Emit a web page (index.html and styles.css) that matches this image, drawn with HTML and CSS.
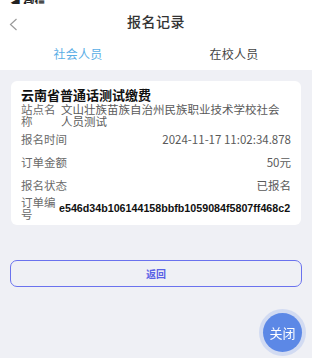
FILE: index.html
```html
<!DOCTYPE html>
<html>
<head>
  <meta charset="utf-8">
  <title>报名记录</title>
  <link rel="stylesheet" href="styles.css">
</head>
<body>

  <header class="top">
    <div class="status">&#9664; 微信</div>
    <div class="nav">
      <svg class="back" width="9" height="13" viewBox="0 0 9 13">
        <path d="M7.5 1 L1.5 6.5 L7.5 12" fill="none" stroke="#9a9a9a" stroke-width="1.2"/>
      </svg>
      <h1>报名记录</h1>
    </div>
    <div class="tabs">
      <span class="tab active">社会人员</span>
      <span class="tab">在校人员</span>
    </div>
  </header>

  <div class="card">
    <div class="card-title">云南省普通话测试缴费</div>
    <div class="row wrap">
      <span class="label">站点名称</span>
      <span class="value">文山壮族苗族自治州民族职业技术学校社会人员测试</span>
    </div>
    <div class="row first">
      <span class="label">报名时间</span>
      <span class="value">2024-11-17 11:02:34.878</span>
    </div>
    <div class="row">
      <span class="label">订单金额</span>
      <span class="value">50元</span>
    </div>
    <div class="row">
      <span class="label">报名状态</span>
      <span class="value">已报名</span>
    </div>
    <div class="row wrap order">
      <span class="label">订单编号</span>
      <span class="value hash">e546d34b106144158bbfb1059084f5807ff468c2</span>
    </div>
  </div>

  <button class="btn-back">返回</button>

  <button class="fab">关闭</button>

</body>
</html>
```

FILE: styles.css
```css
body {
  margin: 0;
  background: #eff0f5;
  font-family: "Noto Sans CJK SC", "Noto Sans", sans-serif;
  color: #333;
}

.top {
  background: #fff;
  height: 70px;
}

.status {
  height: 4px;
  overflow: hidden;
  padding-left: 10px;
  font-size: 11px;
  font-weight: bold;
  line-height: 4px;
  color: #222;
}

.nav {
  height: 33px;
  display: flex;
  align-items: center;
  justify-content: center;
  position: relative;
}

.nav .back {
  position: absolute;
  left: 9px;
  top: 14px;
}

.nav h1 {
  margin: 0;
  font-size: 14px;
  font-weight: 500;
  color: #333;
  letter-spacing: 0.5px;
}

.tabs {
  display: flex;
  height: 33px;
  align-items: center;
}

.tab {
  flex: 1;
  text-align: center;
  font-size: 12px;
  color: #444;
  letter-spacing: 0.3px;
}

.tab.active {
  color: #5aaee6;
}

.card {
  margin: 11px 11px 0;
  padding: 7px 10px 5px;
  background: #fff;
  border-radius: 6px;
}

.card-title {
  font-size: 13px;
  font-weight: bold;
  line-height: 14px;
  margin-bottom: 2px;
  color: #111;
}

.row {
  display: flex;
  justify-content: space-between;
  align-items: center;
  font-size: 11.5px;
  line-height: 14px;
  color: #6a6a6a;
  margin-top: 9px;
}

.row.wrap {
  justify-content: flex-start;
  line-height: 11.5px;
  margin-top: 0;
}

.row.first {
  margin-top: 5px;
}

.row.wrap .label {
  width: 36px;
  flex-shrink: 0;
  margin-right: 4px;
}

.row.wrap .value {
  align-self: flex-start;
  padding-right: 8px;
}

.row.order {
  margin-top: 5px;
}

.row.order .value {
  align-self: center;
  margin-left: -2px;
  padding-right: 0;
}

.value {
  color: #5a5a5a;
}

.hash {
  font-family: "Liberation Sans", sans-serif;
  font-size: 10.7px;
  font-weight: bold;
  color: #111;
  white-space: nowrap;
}

.btn-back {
  display: block;
  box-sizing: border-box;
  width: 292px;
  height: 27px;
  margin: 35px 10px 0;
  background: transparent;
  border: 1px solid #6a72ee;
  border-radius: 7px;
  font-family: "Noto Sans CJK SC", sans-serif;
  font-size: 10px;
  font-weight: bold;
  color: #5a62e6;
}

.fab {
  position: fixed;
  left: 263px;
  top: 313px;
  width: 39px;
  height: 39px;
  border: none;
  border-radius: 50%;
  background: #5c88e6;
  box-shadow: 0 0 0 4px #d2dbf2;
  color: #fff;
  font-family: "Noto Sans CJK SC", sans-serif;
  font-size: 13px;
  padding: 0;
}
```
